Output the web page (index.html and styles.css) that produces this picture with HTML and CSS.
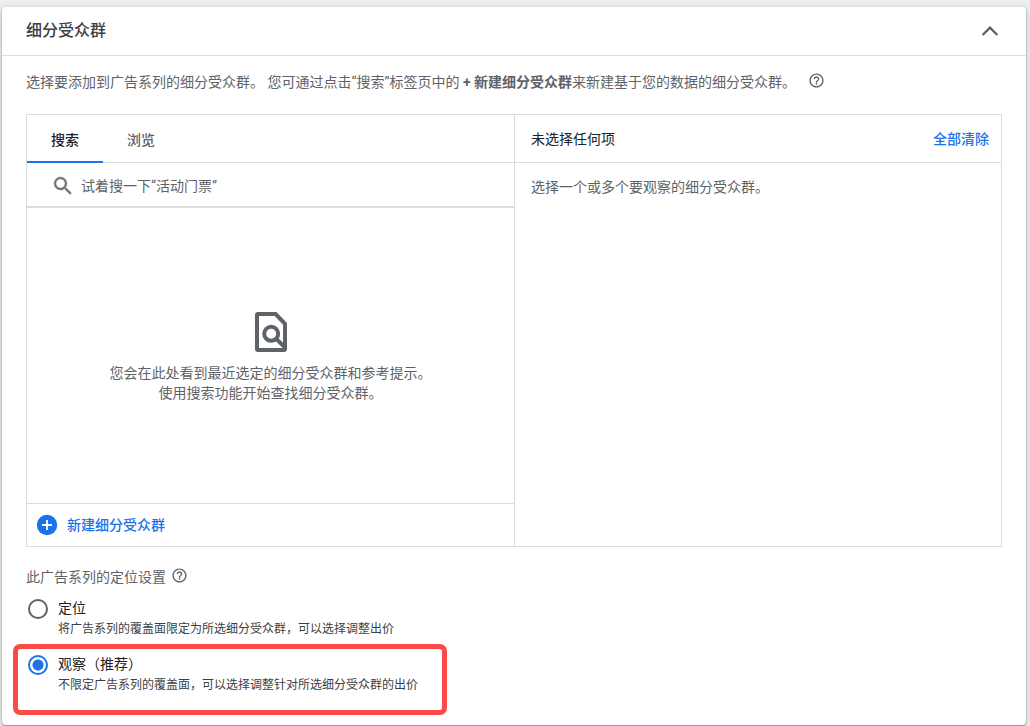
FILE: index.html
```
<!DOCTYPE html>
<html lang="zh-CN">
<head>
    <meta charset="UTF-8">
    <meta name="viewport" content="width=device-width, initial-scale=1.0">
    <title>细分受众群</title>
    <link rel="stylesheet" href="styles.css">
</head>
<body>
    <main class="card">
        <header class="card-header">
            <h1>细分受众群</h1>
            <button type="button" class="collapse-btn" aria-label="收起">
                <svg width="24" height="24" viewBox="0 0 24 24"><path d="M4.600 16 12 8.600 19.400 16" fill="none" stroke="currentColor" stroke-width="2.200"/></svg>
            </button>
        </header>

        <div class="card-body">
            <p class="intro">
                <span>选择要添加到广告系列的细分受众群。 您可通过点击“搜索”标签页中的 <b>+ 新建细分受众群</b>来新建基于您的数据的细分受众群。</span>
                <button type="button" class="help-btn" aria-label="帮助">
                    <svg width="17" height="17" viewBox="0 0 24 24"><path fill="currentColor" d="M11 18h2v-2h-2v2zm1-16C6.480 2 2 6.480 2 12s4.480 10 10 10 10-4.480 10-10S17.520 2 12 2zm0 18c-4.410 0-8-3.590-8-8s3.590-8 8-8 8 3.590 8 8-3.590 8-8 8zm0-14c-2.210 0-4 1.790-4 4h2c0-1.100.9-2 2-2s2 .9 2 2c0 2-3 1.750-3 5h2c0-2.250 3-2.500 3-5 0-2.210-1.790-4-4-4z"/></svg>
                </button>
            </p>

            <div class="picker">
                <section class="picker-left">
                    <div class="tabs" role="tablist">
                        <button type="button" class="tab active" role="tab" aria-selected="true">搜索</button>
                        <button type="button" class="tab" role="tab" aria-selected="false">浏览</button>
                    </div>
                    <label class="search">
                        <svg width="24" height="24" viewBox="0 0 24 24"><path fill="currentColor" stroke="currentColor" stroke-width="0.400" d="M15.500 14h-.79l-.28-.27A6.471 6.471 0 0 0 16 9.500 6.500 6.500 0 1 0 9.500 16c1.610 0 3.090-.59 4.230-1.570l.27.28v.79l5 4.990L20.490 19l-4.990-5zm-6 0C7.010 14 5 11.990 5 9.500S7.010 5 9.500 5 14 7.010 14 9.500 11.990 14 9.500 14z"/></svg>
                        <input type="text" placeholder="试着搜一下“活动门票”" aria-label="搜索细分受众群">
                    </label>
                    <div class="empty">
                        <svg width="48" height="48" viewBox="0 0 24 24" fill="none" stroke="currentColor" stroke-width="2">
                            <path d="M5.500 3H14.300L19 7.900V20.500Q19 21 18.500 21H5.500Q5 21 5 20.500V3.500Q5 3 5.500 3Z"/>
                            <circle cx="12.100" cy="12.900" r="3.500"/>
                            <path d="M14.500 15.300 19.300 20"/>
                        </svg>
                        <p>您会在此处看到最近选定的细分受众群和参考提示。<br>使用搜索功能开始查找细分受众群。</p>
                    </div>
                    <button type="button" class="new-segment">
                        <svg width="24" height="24" viewBox="0 0 24 24"><circle cx="12" cy="12" r="10.200" fill="currentColor"/><path d="M12 7v10M7 12h10" stroke="#fff" stroke-width="1.800"/></svg>
                        新建细分受众群
                    </button>
                </section>

                <section class="picker-right">
                    <div class="selected-header">
                        <span>未选择任何项</span>
                        <button type="button" class="clear-btn">全部清除</button>
                    </div>
                    <p>选择一个或多个要观察的细分受众群。</p>
                </section>
            </div>

            <fieldset class="targeting">
                <legend>
                    此广告系列的定位设置
                    <button type="button" class="help-btn" aria-label="帮助">
                        <svg width="17" height="17" viewBox="0 0 24 24"><path fill="currentColor" d="M11 18h2v-2h-2v2zm1-16C6.480 2 2 6.480 2 12s4.480 10 10 10 10-4.480 10-10S17.520 2 12 2zm0 18c-4.410 0-8-3.590-8-8s3.590-8 8-8 8 3.590 8 8-3.590 8-8 8zm0-14c-2.210 0-4 1.790-4 4h2c0-1.100.9-2 2-2s2 .9 2 2c0 2-3 1.750-3 5h2c0-2.250 3-2.500 3-5 0-2.210-1.790-4-4-4z"/></svg>
                    </button>
                </legend>
                <label class="option">
                    <input type="radio" name="targeting" value="targeting">
                    <span class="option-text">
                        <span class="option-title">定位</span>
                        <small>将广告系列的覆盖面限定为所选细分受众群，可以选择调整出价</small>
                    </span>
                </label>
                <label class="option highlighted">
                    <input type="radio" name="targeting" value="observation" checked>
                    <span class="option-text">
                        <span class="option-title">观察（推荐）</span>
                        <small>不限定广告系列的覆盖面，可以选择调整针对所选细分受众群的出价</small>
                    </span>
                </label>
            </fieldset>
        </div>
    </main>
</body>
</html>
```
FILE: styles.css
```
* {
    margin: 0;
    padding: 0;
    box-sizing: border-box;
}

body {
    background-color: #eceef0;
    padding: 7px 4px 1px 2px;
    font-family: Roboto, "Noto Sans CJK SC", sans-serif;
    font-size: 14px;
    line-height: 20px;
    color: #5f6368;
}

button,
input {
    font: inherit;
    color: inherit;
    background: none;
    border: none;
}

button {
    cursor: pointer;
}

svg {
    display: block;
    flex: none;
}

.card {
    background: white;
    border-radius: 4px;
    box-shadow: 0 1px 2px rgba(0, 0, 0, 0.4), 0 2px 8px rgba(0, 0, 0, 0.15);
}

.card-header {
    display: flex;
    justify-content: space-between;
    align-items: center;
    height: 49px;
    padding: 0 24px;
    border-bottom: 1px solid #dadce0;
}

.card-header h1 {
    font-size: 16px;
    font-weight: 500;
    line-height: 24px;
    color: #3c4043;
}

.collapse-btn {
    color: #56606c;
}

.card-body {
    padding: 16px 24px 30px;
}

.intro {
    display: flex;
    align-items: flex-start;
    gap: 12px;
    margin-bottom: 22px;
}

/* Seletor de segmentos */
.picker {
    display: grid;
    grid-template-columns: 1fr 1fr;
    min-height: 433px;
    border: 1px solid #dadce0;
}

.picker-left {
    display: flex;
    flex-direction: column;
}

.tabs {
    display: flex;
    height: 48px;
    border-bottom: 1px solid #dadce0;
}

.tab {
    height: 48px;
    padding: 4px 24px 0;
    border-bottom: 2px solid transparent;
    font-weight: 500;
}

.tab.active {
    color: #202124;
    border-bottom-color: #1a73e8;
}

.search {
    display: flex;
    align-items: center;
    gap: 6px;
    height: 45px;
    padding: 2px 24px 0;
    border-bottom: 2px solid #dadce0;
}

.search svg {
    color: #757575;
}

.search input {
    flex: 1;
    outline: none;
}

.search input::placeholder {
    color: #5f6368;
    opacity: 1;
}

.empty {
    flex: 1;
    display: flex;
    flex-direction: column;
    align-items: center;
    justify-content: center;
    gap: 7px;
    text-align: center;
}

.new-segment {
    display: flex;
    align-items: center;
    gap: 8px;
    height: 43px;
    padding: 0 8px;
    border-top: 1px solid #dadce0;
    color: #1a73e8;
    font-weight: 500;
}

.picker-right {
    border-left: 1px solid #dadce0;
}

.selected-header {
    display: flex;
    justify-content: space-between;
    align-items: center;
    height: 48px;
    padding: 0 12px 0 16px;
    border-bottom: 1px solid #dadce0;
    color: #202124;
}

.clear-btn {
    color: #1a73e8;
    font-weight: 500;
}

.picker-right p {
    padding: 14px 16px;
}

/* Opções de segmentação */
.targeting {
    border: none;
    margin-top: 20px;
}

.targeting legend {
    display: flex;
    align-items: flex-start;
    gap: 5px;
    margin-bottom: 11px;
}

.help-btn svg {
    color: #5f6368;
}

.option {
    position: relative;
    display: flex;
    align-items: flex-start;
    gap: 10px;
    padding-left: 2px;
    margin-bottom: 15px;
}

.option:last-child {
    margin-bottom: 0;
}

.option input {
    appearance: none;
    flex: none;
    width: 20px;
    height: 20px;
    margin-top: 1px;
    border: 2px solid #5f6368;
    border-radius: 50%;
}

.option input:checked {
    border-color: #1a73e8;
    background: radial-gradient(circle, #1a73e8 5px, transparent 6px);
}

.option-text {
    display: flex;
    flex-direction: column;
    gap: 1px;
}

.option-title {
    color: #202124;
}

.option small {
    font-size: 12px;
    color: #3c4043;
}

.highlighted {
    width: fit-content;
}

/* Moldura de destaque da opção recomendada */
.highlighted::after {
    content: "";
    position: absolute;
    inset: -10px -29px -20px -13px;
    border: 5px solid #fa4b46;
    border-radius: 7px;
    pointer-events: none;
}
```
